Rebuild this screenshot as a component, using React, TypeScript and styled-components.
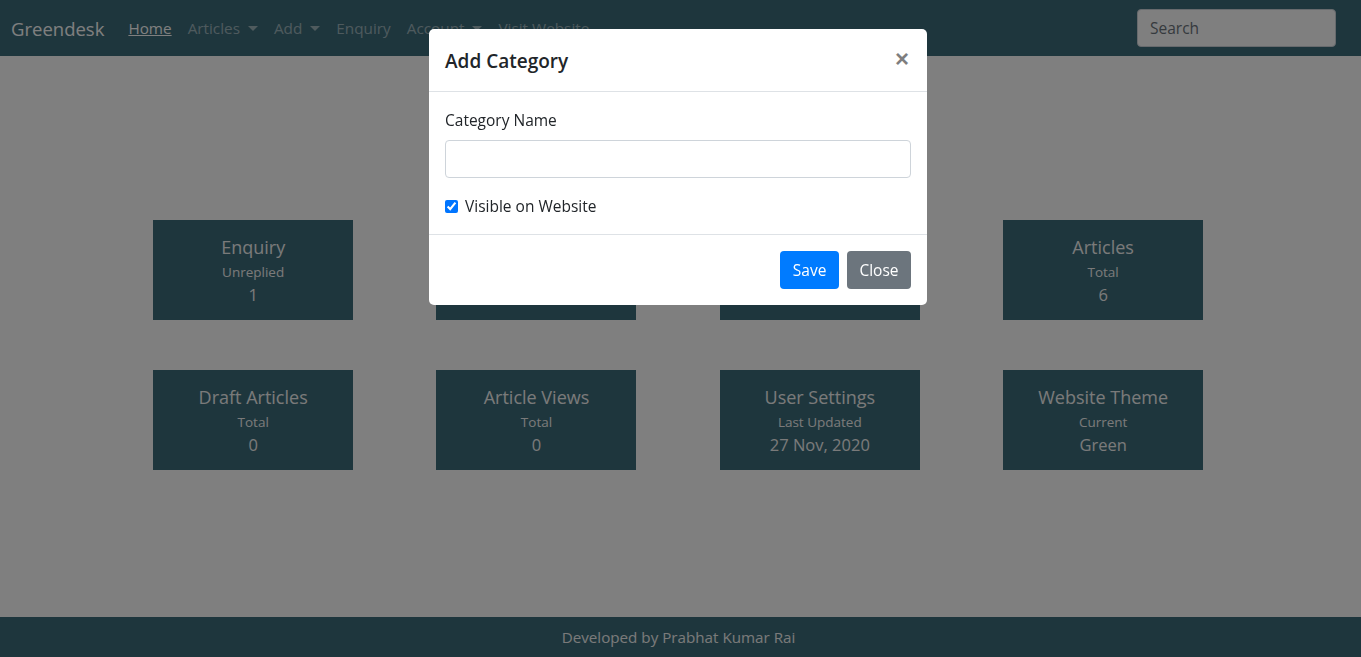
import styled, { createGlobalStyle } from 'styled-components';

const GlobalStyle = createGlobalStyle`
  html, body {
    margin: 0;
    padding: 0;
    background: #ffffff;
    font-family: "Open Sans", "Noto Sans", sans-serif;
    color: #212529;
  }
  * { box-sizing: border-box; }
`;

const Page = styled.div`
  min-height: 657px;
  display: flex;
  flex-direction: column;
`;

// --- Navbar ---
const Navbar = styled.nav`
  height: 56px;
  background: #3c6c7a;
  display: flex;
  align-items: center;
  padding: 0 25px 0 11px;
`;

const Brand = styled.a`
  font-size: 18.5px;
  color: #ffffff;
  margin-right: 16px;
  text-decoration: none;
  white-space: nowrap;
`;

const NavList = styled.ul`
  display: flex;
  list-style: none;
  margin: 0;
  padding: 0;
  flex: 1;
`;

const NavLink = styled.a<{ $active?: boolean }>`
  display: block;
  padding: 8px;
  font-size: 15.3px;
  color: ${({ $active }) => ($active ? '#ffffff' : 'rgba(255,255,255,0.5)')};
  text-decoration: ${({ $active }) => ($active ? 'underline' : 'none')};
  white-space: nowrap;
`;

const Caret = styled.span`
  display: inline-block;
  margin-left: 8px;
  vertical-align: 3px;
  border-top: 5px solid currentColor;
  border-left: 5px solid transparent;
  border-right: 5px solid transparent;
`;

const SearchInput = styled.input`
  width: 199px;
  height: 38px;
  border: 1px solid #ced4da;
  border-radius: 4px;
  padding: 6px 12px;
  font-family: inherit;
  font-size: 15.5px;
  color: #495057;
  background: #ffffff;
  &::placeholder { color: #6c757d; }
`;

// --- Dashboard ---
const Main = styled.main`
  flex: 1;
  padding: 164px 0 0 111.5px;
`;

const CardGrid = styled.div`
  display: grid;
  grid-template-columns: repeat(4, 283.33px);
  row-gap: 50px;
`;

const Card = styled.div`
  justify-self: center;
  width: 200px;
  height: 100px;
  background: #3c6c7a;
  color: #f5f5f5;
  display: flex;
  flex-direction: column;
  align-items: center;
  justify-content: center;
  text-align: center;
  padding-top: 2px;
`;

const CardTitle = styled.div`
  font-size: 18px;
  line-height: 22px;
`;

const CardSub = styled.div`
  font-size: 13.5px;
  line-height: 24px;
  margin-top: 2px;
`;

const CardValue = styled.div`
  font-size: 16.5px;
  line-height: 24px;
  margin-top: -1px;
`;

const Footer = styled.footer`
  height: 40px;
  background: #3c6c7a;
  color: #f5f5f5;
  display: flex;
  align-items: center;
  justify-content: center;
  font-size: 15.2px;
  padding-right: 4px;
`;

// --- Modal ---
const Backdrop = styled.div`
  position: fixed;
  inset: 0;
  background: rgba(0, 0, 0, 0.5);
`;

const Modal = styled.div`
  position: fixed;
  top: 29px;
  left: 429px;
  width: 498px;
  background: #ffffff;
  border-radius: 5px;
  display: flex;
  flex-direction: column;
`;

const ModalHeader = styled.div`
  height: 63px;
  display: flex;
  align-items: center;
  justify-content: space-between;
  padding: 2px 16px 0;
  border-bottom: 1px solid #dee2e6;
`;

const ModalTitle = styled.h5`
  margin: 0;
  font-size: 19px;
  font-weight: 600;
  color: #212529;
`;

const CloseX = styled.button`
  border: 0;
  background: none;
  padding: 0 2px 4px 0;
  font-size: 24px;
  font-weight: 700;
  line-height: 1;
  color: #000;
  opacity: 0.5;
  font-family: "Liberation Sans", sans-serif;
`;

const ModalBody = styled.div`
  padding: 16px;
  border-bottom: 1px solid #dee2e6;
`;

const Label = styled.label`
  display: block;
  font-size: 15.5px;
  line-height: 24px;
  margin-bottom: 8px;
`;

const TextInput = styled.input`
  display: block;
  width: 100%;
  height: 38px;
  border: 1px solid #ced4da;
  border-radius: 4px;
  margin-bottom: 16px;
`;

const CheckRow = styled.label`
  display: flex;
  align-items: center;
  gap: 7px;
  font-size: 15.5px;
  line-height: 24px;

  input {
    margin: 0;
    width: 13px;
    height: 13px;
    accent-color: #0075ff;
  }
`;

const ModalFooter = styled.div`
  display: flex;
  justify-content: flex-end;
  gap: 8px;
  padding: 16px;
`;

const Button = styled.button<{ $variant: 'primary' | 'secondary' }>`
  height: 38px;
  padding: 0 12.5px;
  border: 0;
  border-radius: 4px;
  font-family: inherit;
  font-size: 15.5px;
  color: #ffffff;
  background: ${({ $variant }) => ($variant === 'primary' ? '#007bff' : '#6c757d')};
`;

const cards = [
  { title: 'Enquiry', sub: 'Unreplied', value: '1' },
  { title: 'Categories', sub: 'Total', value: '3' },
  { title: 'Users', sub: 'Total', value: '1' },
  { title: 'Articles', sub: 'Total', value: '6' },
  { title: 'Draft Articles', sub: 'Total', value: '0' },
  { title: 'Article Views', sub: 'Total', value: '0' },
  { title: 'User Settings', sub: 'Last Updated', value: '27 Nov, 2020' },
  { title: 'Website Theme', sub: 'Current', value: 'Green' },
];

export default function App() {
  return (
    <>
      <GlobalStyle />
      <Page>
        <Navbar>
          <Brand href="#">Greendesk</Brand>
          <NavList>
            <li><NavLink href="#" $active>Home</NavLink></li>
            <li><NavLink href="#">Articles<Caret /></NavLink></li>
            <li><NavLink href="#">Add<Caret /></NavLink></li>
            <li><NavLink href="#">Enquiry</NavLink></li>
            <li><NavLink href="#">Account<Caret /></NavLink></li>
            <li><NavLink href="#">Visit Website</NavLink></li>
          </NavList>
          <SearchInput placeholder="Search" />
        </Navbar>

        <Main>
          <CardGrid>
            {cards.map((c) => (
              <Card key={c.title}>
                <CardTitle>{c.title}</CardTitle>
                <CardSub>{c.sub}</CardSub>
                <CardValue>{c.value}</CardValue>
              </Card>
            ))}
          </CardGrid>
        </Main>

        <Footer>Developed by Prabhat Kumar Rai</Footer>
      </Page>

      <Backdrop />
      <Modal>
        <ModalHeader>
          <ModalTitle>Add Category</ModalTitle>
          <CloseX>×</CloseX>
        </ModalHeader>
        <ModalBody>
          <Label>Category Name</Label>
          <TextInput />
          <CheckRow>
            <input type="checkbox" defaultChecked />
            Visible on Website
          </CheckRow>
        </ModalBody>
        <ModalFooter>
          <Button $variant="primary">Save</Button>
          <Button $variant="secondary">Close</Button>
        </ModalFooter>
      </Modal>
    </>
  );
}
